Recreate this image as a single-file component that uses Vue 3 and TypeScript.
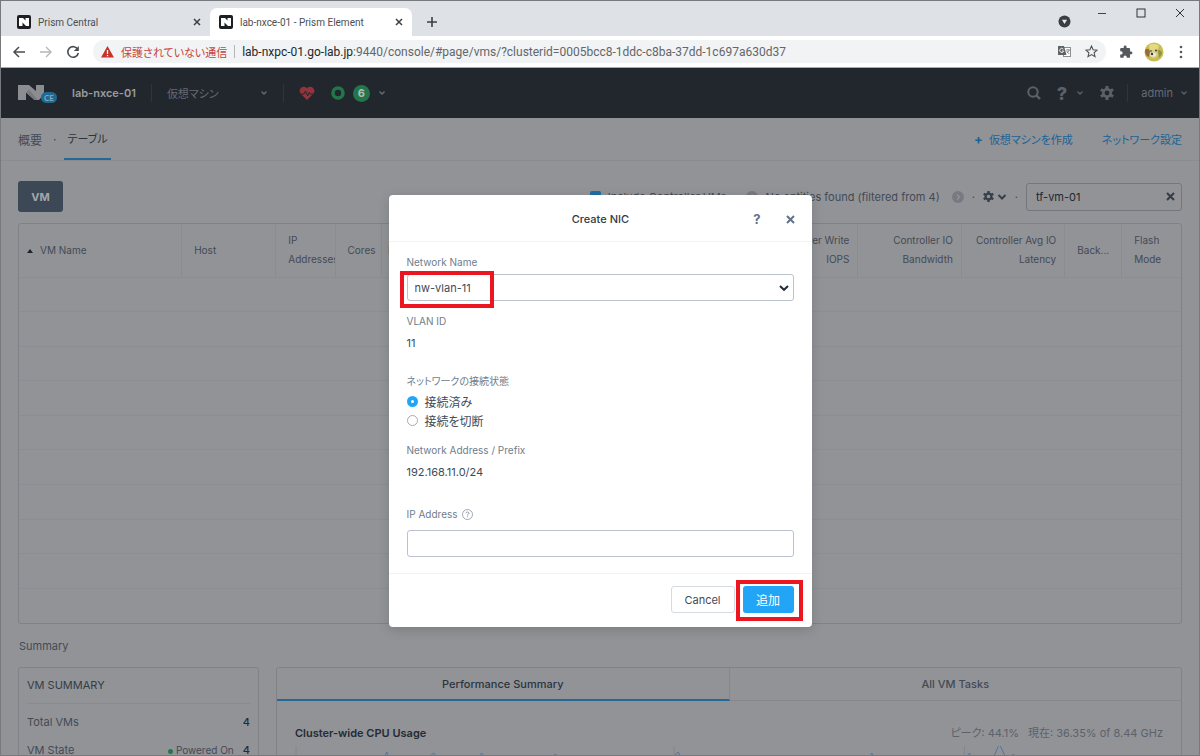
<script setup lang="ts">
import { ref } from 'vue'

interface Column {
  lines: string[]
  width: string
  align?: string
}

const columns: Column[] = [
  { lines: ['VM Name'], width: '14%', align: 'first' },
  { lines: ['Host'], width: '8.1%' },
  { lines: ['IP', 'Addresses'], width: '5.1%' },
  { lines: ['Cores'], width: '4%' },
  { lines: ['Memory'], width: '7.8%', align: 'tight' },
  { lines: [], width: '24.2%' },
  { lines: ['Controller Write', 'IOPS'], width: '9%', align: 'right' },
  { lines: ['Controller IO', 'Bandwidth'], width: '8.9%', align: 'right' },
  { lines: ['Controller Avg IO', 'Latency'], width: '8.9%', align: 'right' },
  { lines: ['Back...'], width: '4.9%' },
  { lines: ['Flash', 'Mode'], width: '5.1%' },
]

const network = ref('nw-vlan-11')
const connection = ref('connected')
const ipAddress = ref('')
const filter = ref('tf-vm-01')
const includeControllers = ref(true)
</script>

<template>
  <div class="window">
    <header class="tabstrip">
      <div class="tab">
        <svg class="favicon" viewBox="0 0 14 14"><rect width="14" height="14" rx="2" fill="#1d2023" /><path d="M2 3h4l2.500 2.500V3H12v8H9L5.500 7.500V11H2z" fill="#fff" /></svg>
        <span class="tab-title">Prism Central</span>
        <button class="plain" aria-label="Close Prism Central"><svg width="8" height="8" viewBox="0 0 8 8"><path d="M1 1l6 6M7 1L1 7" stroke="#3c4043" stroke-width="1.500" /></svg></button>
      </div>
      <div class="tab active">
        <svg class="favicon" viewBox="0 0 14 14"><rect width="14" height="14" rx="2" fill="#1d2023" /><path d="M2 3h4l2.500 2.500V3H12v8H9L5.500 7.500V11H2z" fill="#fff" /></svg>
        <span class="tab-title">lab-nxce-01 - Prism Element</span>
        <button class="plain" aria-label="Close Prism Element"><svg width="8" height="8" viewBox="0 0 8 8"><path d="M1 1l6 6M7 1L1 7" stroke="#3c4043" stroke-width="1.500" /></svg></button>
      </div>
      <button class="plain new-tab" aria-label="New tab"><svg width="12" height="12" viewBox="0 0 12 12"><path d="M6 1v10M1 6h10" stroke="#3c4043" stroke-width="1.600" /></svg></button>
      <div class="window-controls">
        <button class="plain account" aria-label="Search tabs"><svg width="13" height="13" viewBox="0 0 13 13"><circle cx="6.500" cy="6.500" r="6" fill="#3a3d41" /><path d="M3.900 4.800h5.200L6.500 9z" fill="#e8eaed" /></svg></button>
        <button class="plain" aria-label="Minimize"><svg width="10" height="10" viewBox="0 0 10 10"><path d="M1 5.500h8" stroke="#444" /></svg></button>
        <button class="plain" aria-label="Maximize"><svg width="10" height="10" viewBox="0 0 10 10"><rect x="1" y="1" width="8" height="8" fill="none" stroke="#333" /></svg></button>
        <button class="plain" aria-label="Close window"><svg width="10" height="10" viewBox="0 0 10 10"><path d="M1 1l8 8M9 1L1 9" stroke="#333" /></svg></button>
      </div>
    </header>

    <div class="addressbar">
      <button class="plain" aria-label="Back"><svg width="14" height="14" viewBox="0 0 14 14"><path d="M13 7H2M7 2L2 7l5 5" fill="none" stroke="#4a4d51" stroke-width="1.500" /></svg></button>
      <button class="plain" aria-label="Forward"><svg width="14" height="14" viewBox="0 0 14 14"><path d="M1 7h11M7 2l5 5-5 5" fill="none" stroke="#b5b7ba" stroke-width="1.400" /></svg></button>
      <button class="plain" aria-label="Reload"><svg width="14" height="14" viewBox="0 0 14 14"><path d="M11.800 4.500A5.300 5.300 0 1 0 12.300 8" fill="none" stroke="#4a4d51" stroke-width="1.600" /><path d="M12.800 1v5H7.800z" fill="#4a4d51" /></svg></button>
      <div class="omnibox">
        <svg width="13" height="12" viewBox="0 0 13 12"><path d="M6.500 0L13 11.500H0z" fill="#c5322a" /><path d="M6.500 4v4M6.500 9v1.300" stroke="#fff" stroke-width="1.300" /></svg>
        <span class="insecure">保護されていない通信</span>
        <span class="omni-sep"></span>
        <span class="url"><b>lab-nxpc-01.go-lab.jp</b>:9440/console/#page/vms/?clusterid=0005bcc8-1ddc-c8ba-37dd-1c697a630d37</span>
        <button class="plain" aria-label="Translate"><svg width="13" height="13" viewBox="0 0 13 13"><rect x="5.500" y="2.500" width="7" height="9" fill="#fff" stroke="#8a8d91" /><path d="M0 1h6l2.500 9H0z" fill="#5f6368" /><path d="M5.300 4.200A2 2 0 1 0 5.600 6H4" fill="none" stroke="#fff" stroke-width=".9" /><path d="M8 5h4M10 4v1M9 8l2.500-3M8.700 6l2.500 3" stroke="#777" stroke-width=".8" /></svg></button>
        <button class="plain" aria-label="Bookmark"><svg width="13" height="13" viewBox="0 0 13 13"><path d="M6.500 1l1.600 3.700 4 .4-3 2.700.9 3.900-3.500-2.100L3 11.700l.9-3.900-3-2.700 4-.4z" fill="none" stroke="#505357" stroke-width="1.100" /></svg></button>
      </div>
      <button class="plain" aria-label="Extensions"><svg width="14" height="14" viewBox="0 0 24 24"><path fill="#55595e" d="M20.500 11H19V7a2 2 0 0 0-2-2h-4V3.500a2.500 2.500 0 0 0-5 0V5H4a2 2 0 0 0-2 2v3.800h1.500a2.700 2.700 0 0 1 0 5.400H2V20a2 2 0 0 0 2 2h3.800v-1.500a2.700 2.700 0 0 1 5.400 0V22H17a2 2 0 0 0 2-2v-4h1.500a2.500 2.500 0 0 0 0-5z" /></svg></button>
      <button class="plain profile" aria-label="Profile">
        <svg width="20" height="20" viewBox="0 0 20 20"><circle cx="10" cy="10" r="9.500" fill="#c8bd55" /><path d="M1 8q3-3 5 1l-1 6Q1 14 1 8z" fill="#976b3c" /><path d="M5 3q6-3 10 1l-2 5H6z" fill="#e2da7c" /><path d="M6 9q4-3 7 0l1 4q-4 6-8 1z" fill="#d9d18a" /><path d="M14 8q4 0 4 4l-3 4z" fill="#8e9442" /><circle cx="7" cy="9" r=".8" fill="#312e29" /><circle cx="12" cy="8.500" r=".9" fill="#312e29" /><ellipse cx="9" cy="12.500" rx="3" ry="2" fill="#e9e9e4" /><circle cx="8" cy="12" r="1.200" fill="#353535" /></svg>
      </button>
      <button class="plain" aria-label="Menu"><svg width="4" height="14" viewBox="0 0 4 14"><g fill="#55595e"><circle cx="2" cy="2" r="1.300" /><circle cx="2" cy="7" r="1.300" /><circle cx="2" cy="12" r="1.300" /></g></svg></button>
    </div>

    <div class="page">
      <nav class="topnav">
        <svg class="logo" width="40" height="20" viewBox="0 0 40 20">
          <path d="M0 2h11l7 6V2h8v9l-5 6h-4.500L8 9.500V17H0z" fill="#8b8d90" /><path d="M8 9.500l3-3 8.500 10.500h-3z" fill="#77797d" />
          <rect x="23" y="9" width="16" height="11" rx="5.500" fill="#1f6a92" /><text x="31" y="17.500" text-anchor="middle" font-size="8" font-family="Lato, sans-serif" font-weight="700" fill="#83a9bf">CE</text>
        </svg>
        <strong class="cluster">lab-nxce-01</strong>
        <span class="nav-sep"></span>
        <button class="plain section">仮想マシン<svg width="8" height="6" viewBox="0 0 8 6"><path d="M1.500 1.500L4 4l2.500-2.500" fill="none" stroke="#676d77" stroke-width="1.300" /></svg></button>
        <span class="nav-sep"></span>
        <div class="status">
          <svg width="16" height="15" viewBox="0 0 16 15"><path d="M8 14L1.500 7.500A4 4 0 0 1 8 2.300a4 4 0 0 1 6.500 5.200z" fill="#93343b" /><path d="M0 8h5l1.500-3 2.200 5 1.500-3.500L11 8h5" fill="none" stroke="#22272e" /></svg>
          <svg class="ring" width="14" height="14" viewBox="0 0 14 14"><circle cx="7" cy="7" r="5" fill="none" stroke="#23764a" stroke-width="3.600" /></svg>
          <span class="count">6</span>
          <svg width="8" height="6" viewBox="0 0 8 6"><path d="M1.500 1.500L4 4l2.500-2.500" fill="none" stroke="#676d77" stroke-width="1.300" /></svg>
        </div>
        <div class="nav-right">
          <button class="plain" aria-label="Search"><svg width="14" height="14" viewBox="0 0 14 14"><circle cx="6" cy="6" r="4.700" fill="none" stroke="#5b616b" stroke-width="2" /><path d="M9.500 9.500l3.500 3.500" stroke="#5b616b" stroke-width="2.400" /></svg></button>
          <button class="plain help">?<svg width="8" height="6" viewBox="0 0 8 6"><path d="M1.500 1.500L4 4l2.500-2.500" fill="none" stroke="#5b616b" stroke-width="1.300" /></svg></button>
          <button class="plain" aria-label="Settings"><svg width="14" height="14" viewBox="0 0 14 14"><circle cx="7" cy="7" r="3.700" fill="none" stroke="#5b616b" stroke-width="2.600" /><path d="M7 0v3M7 11v3M.9 3.500l2.600 1.500M10.500 9l2.600 1.500M.9 10.500L3.500 9M10.500 5l2.600-1.500" stroke="#5b616b" stroke-width="3" /></svg></button>
          <span class="nav-sep"></span>
          <button class="plain admin">admin<svg width="8" height="6" viewBox="0 0 8 6"><path d="M1.500 1.500L4 4l2.500-2.500" fill="none" stroke="#5b616b" stroke-width="1.300" /></svg></button>
        </div>
      </nav>

      <div class="subnav">
        <a href="#overview">概要</a><span class="dot">·</span><a href="#table" class="current">テーブル</a>
        <div class="actions"><a href="#create"><b>+</b>仮想マシンを作成</a><a href="#network">ネットワーク設定</a></div>
      </div>

      <main class="content">
        <div class="toolbar">
          <button class="vm">VM</button>
          <div class="filters">
            <label class="include"><input v-model="includeControllers" type="checkbox" />Include Controller VMs</label>
            <span>·</span>
            <svg width="12" height="12" viewBox="0 0 12 12"><circle cx="6" cy="6" r="6" fill="#777a80" /><path d="M7 3.500L4.500 6 7 8.500" fill="none" stroke="#929397" stroke-width="1.300" /></svg>
            <span class="found">No entities found (filtered from 4)</span>
            <svg class="next" width="12" height="12" viewBox="0 0 12 12"><circle cx="6" cy="6" r="6" fill="#777a80" /><path d="M5 3.500L7.500 6 5 8.500" fill="none" stroke="#929397" stroke-width="1.300" /></svg>
            <span>·</span>
            <button class="plain gear" aria-label="Table settings"><svg width="11" height="11" viewBox="0 0 14 14"><circle cx="7" cy="7" r="3.700" fill="none" stroke="#36404b" stroke-width="2.800" /><path d="M7 0v3M7 11v3M.9 3.500l2.600 1.500M10.500 9l2.600 1.500M.9 10.500L3.500 9M10.500 5l2.600-1.500" stroke="#36404b" stroke-width="3" /></svg><svg width="10" height="8" viewBox="0 0 10 8"><path d="M1.500 2L5 5.500 8.500 2" fill="none" stroke="#36404b" stroke-width="2" /></svg></button>
            <span>·</span>
          </div>
          <div class="search">
            <input v-model="filter" type="text" aria-label="Filter VMs" />
            <button class="plain" aria-label="Clear filter"><svg width="9" height="9" viewBox="0 0 9 9"><path d="M1 1l7 7M8 1L1 8" stroke="#333d48" stroke-width="2" /></svg></button>
          </div>
        </div>

        <div class="table-card">
          <table>
            <colgroup><col v-for="(c, i) in columns" :key="i" :style="{ width: c.width }" /></colgroup>
            <thead>
              <tr>
                <th v-for="(c, i) in columns" :key="i" :class="c.align">
                  <svg v-if="i === 0" width="6" height="4" viewBox="0 0 6 4"><path d="M3 0l3 4H0z" fill="#1e242b" /></svg>
                  <span v-for="l in c.lines" :key="l" class="line">{{ l }}</span>
                </th>
              </tr>
            </thead>
            <tbody><tr v-for="r in 10" :key="r"><td :colspan="columns.length"></td></tr></tbody>
          </table>
        </div>

        <h2 class="heading">Summary</h2>
        <div class="panels">
          <section class="summary">
            <h3>VM SUMMARY</h3>
            <div class="stat"><span>Total VMs</span><b>4</b></div>
            <div class="stat"><span>VM State</span><span class="power"><i></i>Powered On</span><b>4</b></div>
          </section>
          <section class="performance">
            <div class="perf-tabs"><button class="plain selected">Performance Summary</button><button class="plain">All VM Tasks</button></div>
            <div class="chart-head"><h4>Cluster-wide CPU Usage</h4><span class="peak">ピーク: 44.1%</span><span>現在: 36.35% of 8.44 GHz</span></div>
            <svg class="chart" height="40" viewBox="0 0 870 40" preserveAspectRatio="none"><path d="M1 0v40M380 0v40M671 0v40" fill="none" stroke="#85878c" /><path d="M0 30L60 20 88 14 92 6l4 10 35-2 8-7 6 7 36 0 6-7 6 8 61 0 7-7 6 8 108 0 9-10 6 10 184 0 4-9 5 9 86 0 7-9 6 9 16 0 8-18 8 17 6-7 6 9 139 0 8-12" fill="none" stroke="#54749e" /></svg>
          </section>
        </div>
      </main>

      <div class="backdrop">
        <form class="modal" role="dialog" aria-labelledby="dialog-title" @submit.prevent>
          <header>
            <h1 id="dialog-title">Create NIC</h1>
            <button type="button" class="plain question">?</button>
            <button type="button" class="plain" aria-label="Close"><svg width="9" height="9" viewBox="0 0 9 9"><path d="M1 1l7 7M8 1L1 8" stroke="#627386" stroke-width="2" /></svg></button>
          </header>
          <div class="body">
            <label class="label" for="network">Network Name</label>
            <div class="select-wrap">
              <select id="network" v-model="network"><option>nw-vlan-11</option></select>
              <svg width="10" height="8" viewBox="0 0 10 8"><path d="M1 2l4 3.800L9 2" fill="none" stroke="#222d3a" stroke-width="2" /></svg>
            </div>
            <span class="label">VLAN ID</span>
            <span class="value">11</span>
            <fieldset>
              <legend class="label">ネットワークの接続状態</legend>
              <label class="radio"><input v-model="connection" type="radio" name="connection" value="connected" />接続済み</label>
              <label class="radio"><input v-model="connection" type="radio" name="connection" value="disconnected" />接続を切断</label>
            </fieldset>
            <span class="label">Network Address / Prefix</span>
            <span class="value">192.168.11.0/24</span>
            <label class="label ip" for="ip">IP Address <svg width="11" height="11" viewBox="0 0 11 11"><circle cx="5.500" cy="5.500" r="5" fill="none" stroke="#8793a1" stroke-width=".8" /><path d="M4 4.300Q4 3 5.500 3T7 4.300Q7 5 5.500 5.700v.8M5.500 7.400v.9" fill="none" stroke="#8793a1" stroke-width=".9" /></svg></label>
            <input id="ip" v-model="ipAddress" class="ip-input" type="text" />
          </div>
          <footer>
            <button type="button" class="cancel">Cancel</button>
            <span class="add-wrap"><button type="submit" class="add">追加</button></span>
          </footer>
        </form>
      </div>
    </div>
  </div>
</template>

<style>
body {
  margin: 0;
}
</style>

<style scoped>
*,
*::before {
  box-sizing: border-box;
}
.window {
  display: flex;
  flex-direction: column;
  height: 100vh;
  overflow: hidden;
  border: 1px solid #77797d;
  background: #929397;
  font-family: Inter, "Noto Sans CJK JP", sans-serif;
  font-feature-settings: "palt";
  font-size: 11px;
}
button,
input,
select {
  font: inherit;
  font-feature-settings: inherit;
  color: inherit;
}
svg {
  flex: none;
}
a {
  color: inherit;
  text-decoration: none;
}
.plain {
  display: flex;
  align-items: center;
  padding: 0;
  border: 0;
  background: none;
}
.tabstrip {
  display: flex;
  flex: none;
  height: 35px;
  padding: 7px 14px 0 7px;
  background: #dee1e6;
}
.tab {
  display: flex;
  align-items: center;
  width: 202px;
  padding: 0 9px;
  gap: 7px;
  border-radius: 7px 7px 0 0;
  font-family: Roboto, sans-serif;
  font-size: 10px;
  color: #4c4f53;
}
.tab.active {
  background: #fff;
}
.favicon {
  width: 14px;
  height: 14px;
}
.tab-title {
  flex: 1;
}
.new-tab {
  margin-left: 14px;
}
.window-controls {
  display: flex;
  gap: 29px;
  align-items: flex-start;
  margin-left: auto;
}
.account {
  margin: 7px -3px 0 0;
}
.addressbar {
  display: flex;
  flex: none;
  align-items: center;
  height: 32px;
  padding: 0 16px 0 11px;
  gap: 13px;
  background: #fff;
  border-bottom: 1px solid #a8aaad;
}
.profile {
  margin: 0 2px 0 -2px;
}
.omnibox {
  display: flex;
  flex: 1;
  align-items: center;
  height: 23px;
  padding: 0 8px;
  gap: 7px;
  border-radius: 12px;
  background: #f1f3f4;
  font-family: Roboto, "Noto Sans CJK JP", sans-serif;
  font-size: 12px;
}
.insecure {
  color: #c5443c;
  font-size: 11px;
}
.omni-sep {
  width: 1px;
  height: 13px;
  background: #b4b6b9;
}
.url {
  flex: 1;
  color: #63666a;
  white-space: nowrap;
}
.url b {
  font-weight: 400;
  color: #25272a;
}
.omnibox .plain {
  margin-left: 7px;
}
.page {
  position: relative;
  flex: 1;
  min-height: 0;
  overflow: hidden;
  color: #424a55;
}
.topnav {
  display: flex;
  align-items: center;
  height: 50px;
  padding: 0 11px 0 17px;
  background: #22272e;
  color: #656b75;
}
.cluster {
  margin-left: 14px;
  font-size: 11px;
  font-weight: 600;
  color: #999b9e;
}
.nav-sep {
  width: 1px;
  height: 18px;
  margin: 0 15px;
  background: #30353d;
}
.section {
  justify-content: space-between;
  width: 101px;
}
.status {
  display: flex;
  align-items: center;
}
.ring {
  margin: 0 8px 0 16px;
}
.count {
  display: grid;
  place-items: center;
  width: 17px;
  height: 17px;
  margin-right: 8px;
  border-radius: 50%;
  background: #23764a;
  color: #aebeb4;
  font-weight: 700;
}
.nav-right {
  display: flex;
  align-items: center;
  margin-left: auto;
}
.help {
  gap: 9px;
  margin: 0 16px;
  font-size: 18px;
  font-weight: 800;
  color: #5b616b;
}
.nav-right .nav-sep {
  margin: 0 13px;
}
.admin {
  gap: 7px;
}
.subnav {
  display: flex;
  align-items: center;
  height: 43px;
  padding: 0 17px;
  border-bottom: 1px solid #8a8b90;
  font-size: 12px;
}
.subnav .dot {
  margin: 0 8px 0 11px;
}
.current {
  padding: 12px 3px;
  border-bottom: 2px solid #256795;
  color: #2b333e;
  font-size: 11px;
}
.actions {
  display: flex;
  align-items: center;
  gap: 29px;
  margin-left: auto;
  color: #1d6294;
  font-size: 11px;
}
.actions b {
  margin-right: 6px;
  font-size: 13px;
}
.content {
  padding: 20px 17px 0;
}
.toolbar {
  display: flex;
  align-items: center;
  height: 31px;
}
.vm {
  width: 45px;
  height: 31px;
  border: 0;
  border-radius: 3px;
  background: #3c4855;
  color: #a2a6aa;
  font-weight: 700;
}
.filters {
  display: flex;
  align-items: center;
  gap: 8px;
  margin: 0 8px 0 auto;
}
.include {
  display: flex;
  align-items: center;
  gap: 7px;
}
.include input {
  appearance: none;
  width: 11px;
  height: 11px;
  margin: 0;
  border-radius: 2px;
  background: #1f6da3;
}
.next {
  margin-left: 4px;
}
.gear {
  gap: 3px;
}
.search {
  display: flex;
  align-items: center;
  width: 156px;
  height: 28px;
  padding: 0 6px 0 9px;
  border: 1px solid #74777d;
  border-radius: 3px;
}
.search input {
  flex: 1;
  min-width: 0;
  padding: 0;
  border: 0;
  background: none;
  color: #20272f;
}
.table-card {
  margin-top: 11px;
  border: 1px solid #808287;
  border-radius: 3px;
}
table {
  width: 100%;
  height: 399px;
  table-layout: fixed;
  border-collapse: collapse;
}
th {
  height: 53px;
  padding: 0 0 0 12px;
  overflow: hidden;
  border-right: 1px solid #8b8c91;
  font-size: 10px;
  font-weight: 400;
  line-height: 19px;
  text-align: left;
  white-space: nowrap;
}
th:last-child {
  border-right: 0;
}
.line {
  display: block;
}
.first {
  padding-left: 8px;
}
.first svg,
.first .line {
  display: inline-block;
  vertical-align: middle;
}
.first svg {
  margin-right: 7px;
}
th.tight {
  padding-left: 6px;
}
th.right {
  padding: 0 8px 0 0;
  text-align: right;
}
td {
  height: 34px;
  padding: 0;
  border-top: 1px solid #8d8e93;
}
.heading {
  margin: 14px 1px 13px;
  font-size: 11px;
  font-weight: 400;
  line-height: 16px;
}
.panels {
  display: flex;
  gap: 17px;
}
.summary,
.performance {
  height: 160px;
  border: 1px solid #808287;
  border-radius: 3px;
}
.summary {
  width: 241px;
  padding: 0 8px;
}
h3 {
  margin: 0 0 4px;
  border-bottom: 1px solid #898b90;
  font-size: 11px;
  font-weight: 400;
  line-height: 35px;
  color: #343c46;
}
.stat {
  display: flex;
  gap: 9px;
  line-height: 28px;
}
.stat span:first-child {
  flex: 1;
}
.stat b {
  font-weight: 500;
  color: #252c35;
}
.power {
  font-size: 10px;
}
.power i {
  display: inline-block;
  width: 5px;
  height: 5px;
  margin-right: 3px;
  border-radius: 50%;
  background: #25774b;
}
.performance {
  flex: 1;
}
.perf-tabs {
  display: flex;
}
.perf-tabs button {
  flex: 1;
  justify-content: center;
  height: 33px;
  border-bottom: 1px solid #85878c;
  font-weight: 500;
}
.perf-tabs .selected {
  border-right: 1px solid #85878c;
  border-bottom: 2px solid #256795;
  color: #2c343e;
}
.chart-head {
  display: flex;
  gap: 9px;
  padding: 22px 18px 3px;
  line-height: 20px;
  color: #5c6269;
}
h4 {
  flex: 1;
  margin: 0;
  font-size: 11px;
  font-weight: 600;
  color: #242b34;
}
.chart {
  display: block;
  width: calc(100% - 36px);
  margin: 0 18px;
}
.backdrop {
  position: absolute;
  inset: 0;
  display: flex;
  align-items: flex-start;
  justify-content: center;
  padding-top: 127px;
}
.modal {
  width: 423px;
  border-radius: 4px;
  background: #fff;
  box-shadow: 0 3px 12px rgba(0, 0, 0, 0.15);
  color: #414b57;
}
.modal header {
  display: flex;
  align-items: center;
  height: 47px;
  padding: 2px 17px 0;
  border-bottom: 1px solid #f0f2f4;
}
h1 {
  flex: 1;
  margin: 0 -42px 0 0;
  font-size: 11px;
  font-weight: 500;
  text-align: center;
  color: #323b46;
}
.question {
  margin-right: 25px;
  font-size: 13px;
  font-weight: 700;
  color: #627386;
}
.body {
  display: flex;
  flex-direction: column;
  padding: 12px 18px 16px;
}
.label {
  padding: 0;
  font-size: 10px;
  line-height: 16px;
  color: #6f7d8c;
}
.value {
  margin: 4px 0 20px;
  line-height: 20px;
}
.select-wrap {
  position: relative;
  margin: 4px 0 12px;
}
.select-wrap::before {
  content: "";
  position: absolute;
  inset: -3px auto -7px -7px;
  width: 94px;
  border: 4px solid #eb1620;
}
select,
.ip-input {
  display: block;
  width: 100%;
  height: 27px;
  padding: 0 7px;
  border: 1px solid #b9c2cd;
  border-radius: 3px;
  background: #fff;
}
select {
  appearance: none;
}
.select-wrap svg {
  position: absolute;
  top: 10px;
  right: 5px;
}
fieldset {
  min-width: 0;
  margin: 0 0 12px;
  padding: 0;
  border: 0;
}
legend {
  margin-bottom: 3px;
}
.radio {
  display: flex;
  align-items: center;
  gap: 7px;
  height: 19px;
  font-size: 12px;
}
.radio input {
  appearance: none;
  width: 11px;
  height: 11px;
  margin: 0;
  border: 1px solid #a2adb9;
  border-radius: 50%;
}
.radio input:checked {
  border: 4px solid #22a5f7;
}
.ip {
  display: flex;
  align-items: center;
  gap: 4px;
  margin: 4px 0 8px;
}
.modal footer {
  display: flex;
  justify-content: flex-end;
  padding: 12px 18px 14px;
  gap: 8px;
  border-top: 1px solid #f0f2f4;
}
.cancel {
  width: 64px;
  height: 27px;
  padding: 0;
  border: 1px solid #d6dbe0;
  border-radius: 3px;
  background: #fff;
}
.add-wrap {
  position: relative;
}
.add-wrap::before {
  content: "";
  position: absolute;
  inset: -6px -9px -8px -7px;
  border: 4px solid #eb1620;
}
.add {
  display: block;
  width: 51px;
  height: 27px;
  padding: 0;
  border: 0;
  border-radius: 3px;
  background: #22a5f7;
  color: #fff;
  font-size: 12px;
}
</style>
